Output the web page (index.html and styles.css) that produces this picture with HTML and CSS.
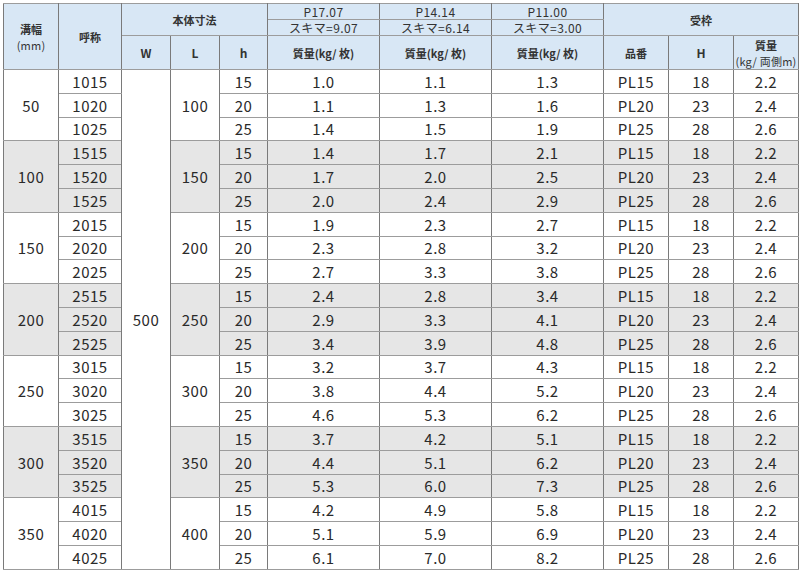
FILE: index.html
```html
<!DOCTYPE html>
<html lang="ja">
<head>
<meta charset="utf-8">
<link rel="stylesheet" href="styles.css">
</head>
<body>
<table class="spec">
<colgroup>
<col class="c-width"><col class="c-name"><col class="c-w"><col class="c-l"><col class="c-h">
<col class="c-p"><col class="c-p"><col class="c-p"><col class="c-pl"><col class="c-hh"><col class="c-m">
</colgroup>
<thead>
<tr class="h1">
<th rowspan="3" class="jp two">溝幅<br><span class="sub">(mm)</span></th>
<th rowspan="3" class="jp">呼称</th>
<th colspan="3" rowspan="2" class="jp">本体寸法</th>
<th class="pn">P17.07</th>
<th class="pn">P14.14</th>
<th class="pn">P11.00</th>
<th colspan="3" rowspan="2" class="jp">受枠</th>
</tr>
<tr class="h2">
<th class="pn">スキマ=9.07</th>
<th class="pn">スキマ=6.14</th>
<th class="pn">スキマ=3.00</th>
</tr>
<tr class="h3">
<th class="lt">W</th>
<th class="lt">L</th>
<th class="lt">h</th>
<th class="jp">質量(kg/ 枚)</th>
<th class="jp">質量(kg/ 枚)</th>
<th class="jp">質量(kg/ 枚)</th>
<th class="jp">品番</th>
<th class="lt">H</th>
<th class="jp two">質量<br><span class="sub">(kg/ 両側m)</span></th>
</tr>
</thead>
<tbody>
<tr><td rowspan="3">50</td><td>1015</td><td rowspan="21" class="wcol">500</td><td rowspan="3">100</td><td>15</td><td>1.0</td><td>1.1</td><td>1.3</td><td>PL15</td><td>18</td><td>2.2</td></tr>
<tr><td>1020</td><td>20</td><td>1.1</td><td>1.3</td><td>1.6</td><td>PL20</td><td>23</td><td>2.4</td></tr>
<tr><td>1025</td><td>25</td><td>1.4</td><td>1.5</td><td>1.9</td><td>PL25</td><td>28</td><td>2.6</td></tr>
<tr class="gray"><td rowspan="3">100</td><td>1515</td><td rowspan="3">150</td><td>15</td><td>1.4</td><td>1.7</td><td>2.1</td><td>PL15</td><td>18</td><td>2.2</td></tr>
<tr class="gray"><td>1520</td><td>20</td><td>1.7</td><td>2.0</td><td>2.5</td><td>PL20</td><td>23</td><td>2.4</td></tr>
<tr class="gray"><td>1525</td><td>25</td><td>2.0</td><td>2.4</td><td>2.9</td><td>PL25</td><td>28</td><td>2.6</td></tr>
<tr><td rowspan="3">150</td><td>2015</td><td rowspan="3">200</td><td>15</td><td>1.9</td><td>2.3</td><td>2.7</td><td>PL15</td><td>18</td><td>2.2</td></tr>
<tr><td>2020</td><td>20</td><td>2.3</td><td>2.8</td><td>3.2</td><td>PL20</td><td>23</td><td>2.4</td></tr>
<tr><td>2025</td><td>25</td><td>2.7</td><td>3.3</td><td>3.8</td><td>PL25</td><td>28</td><td>2.6</td></tr>
<tr class="gray"><td rowspan="3">200</td><td>2515</td><td rowspan="3">250</td><td>15</td><td>2.4</td><td>2.8</td><td>3.4</td><td>PL15</td><td>18</td><td>2.2</td></tr>
<tr class="gray"><td>2520</td><td>20</td><td>2.9</td><td>3.3</td><td>4.1</td><td>PL20</td><td>23</td><td>2.4</td></tr>
<tr class="gray"><td>2525</td><td>25</td><td>3.4</td><td>3.9</td><td>4.8</td><td>PL25</td><td>28</td><td>2.6</td></tr>
<tr><td rowspan="3">250</td><td>3015</td><td rowspan="3">300</td><td>15</td><td>3.2</td><td>3.7</td><td>4.3</td><td>PL15</td><td>18</td><td>2.2</td></tr>
<tr><td>3020</td><td>20</td><td>3.8</td><td>4.4</td><td>5.2</td><td>PL20</td><td>23</td><td>2.4</td></tr>
<tr><td>3025</td><td>25</td><td>4.6</td><td>5.3</td><td>6.2</td><td>PL25</td><td>28</td><td>2.6</td></tr>
<tr class="gray"><td rowspan="3">300</td><td>3515</td><td rowspan="3">350</td><td>15</td><td>3.7</td><td>4.2</td><td>5.1</td><td>PL15</td><td>18</td><td>2.2</td></tr>
<tr class="gray"><td>3520</td><td>20</td><td>4.4</td><td>5.1</td><td>6.2</td><td>PL20</td><td>23</td><td>2.4</td></tr>
<tr class="gray"><td>3525</td><td>25</td><td>5.3</td><td>6.0</td><td>7.3</td><td>PL25</td><td>28</td><td>2.6</td></tr>
<tr><td rowspan="3">350</td><td>4015</td><td rowspan="3">400</td><td>15</td><td>4.2</td><td>4.9</td><td>5.8</td><td>PL15</td><td>18</td><td>2.2</td></tr>
<tr><td>4020</td><td>20</td><td>5.1</td><td>5.9</td><td>6.9</td><td>PL20</td><td>23</td><td>2.4</td></tr>
<tr><td>4025</td><td>25</td><td>6.1</td><td>7.0</td><td>8.2</td><td>PL25</td><td>28</td><td>2.6</td></tr>
</tbody>
</table>
</body>
</html>
```
FILE: styles.css
```css
html, body {
  margin: 0;
  padding: 0;
  background: #fff;
}
body {
  padding: 3px 2px 0 3px;
  font-family: "Noto Sans CJK JP", "Noto Sans", sans-serif;
  color: #2a2a2a;
}
.spec {
  border-collapse: collapse;
  table-layout: fixed;
  width: 796px;
  border: 1px solid #8a8a8a;
}
.c-width { width: 55px; }
.c-name { width: 63px; }
.c-w { width: 49px; }
.c-l { width: 49px; }
.c-h { width: 48px; }
.c-p { width: 112px; }
.c-pl { width: 65px; }
.c-hh { width: 65px; }
.c-m { width: 65px; }

th, td {
  border-left: 1px solid #7a7a7a;
  border-right: 1px solid #7a7a7a;
  border-top: 1px solid #9c9c9c;
  border-bottom: 1px solid #9c9c9c;
  text-align: center;
  vertical-align: middle;
  padding: 0;
  white-space: nowrap;
}
th {
  background: #d8e7f5;
  font-weight: 700;
  font-size: 11px;
  line-height: 14px;
  color: #333;
}
th.pn {
  font-weight: 400;
  font-size: 12px;
  height: 15px;
  line-height: 14px;
  letter-spacing: 0.4px;
}
th.lt {
  font-size: 12px;
}
th.two {
  line-height: 16px;
}
th .sub {
  font-size: 11px;
  font-weight: 400;
  letter-spacing: 0.2px;
}
tr.h3 th {
  height: 33px;
}
td {
  font-size: 15px;
  line-height: 17px;
  height: 22.8px;
  letter-spacing: 0.5px;
  background: #fff;
}
tr.gray td {
  background: #e6e6e6;
}
td.wcol {
  background: #fff;
}
```
